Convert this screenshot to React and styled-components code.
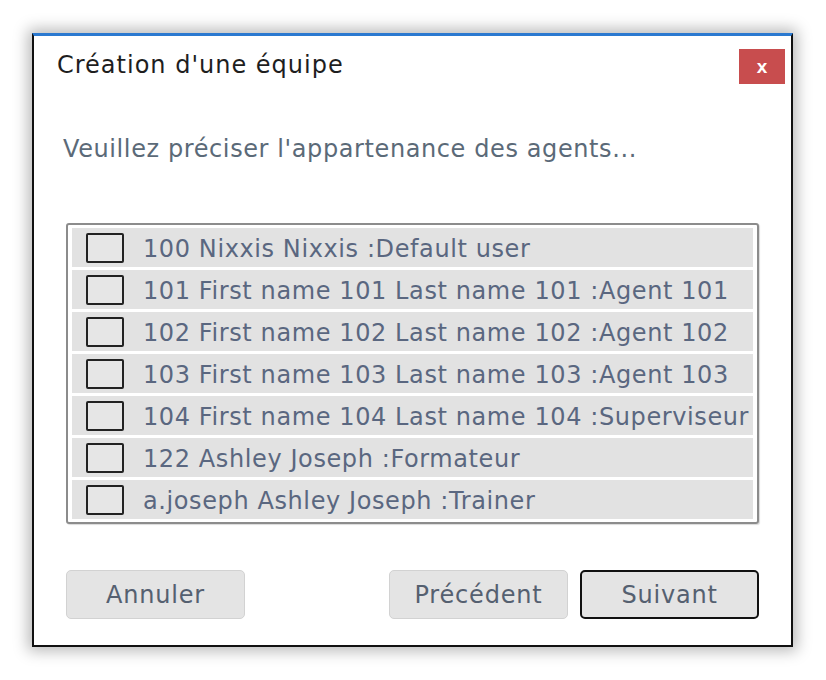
import React, {useState} from 'react'
import styled, {createGlobalStyle} from 'styled-components'

const GlobalStyle = createGlobalStyle`
  html, body {
    margin: 0;
    padding: 0;
    background: #ffffff;
  }
  body {
    font-family: "DejaVu Sans", "Open Sans", sans-serif;
  }
`

const agents = [
    "100 Nixxis Nixxis :Default user",
    "101 First name 101 Last name 101 :Agent 101",
    "102 First name 102 Last name 102 :Agent 102",
    "103 First name 103 Last name 103 :Agent 103",
    "104 First name 104 Last name 104 :Superviseur",
    "122 Ashley Joseph :Formateur",
    "a.joseph Ashley Joseph :Trainer",
]

const App = () => {
    const [checked, setChecked] = useState({})

    const toggle = (i) => {
        setChecked({...checked, [i]: !checked[i]})
    }

  return (
      <Page>
          <GlobalStyle />
          <Dialog>
              <Header>
                  <Title>Création d'une équipe</Title>
                  <CloseButton>x</CloseButton>
              </Header>
              <Intro>Veuillez préciser l'appartenance des agents...</Intro>
              <ListBox>
                  {agents.map((a, i) => (
                      <Row key={a} onClick={() => toggle(i)}>
                          <Check $on={checked[i]} />
                          <Label>{a}</Label>
                      </Row>
                  ))}
              </ListBox>
              <Footer>
                  <Button>Annuler</Button>
                  <Spacer />
                  <Button>Précédent</Button>
                  <Button $primary>Suivant</Button>
              </Footer>
          </Dialog>
      </Page>
  )
}

const Page = styled.div`
    padding: 33px 0 0 32px;
    height: 680px;
    box-sizing: border-box;
`

const Dialog = styled.div`
    width: 761px;
    height: 614px;
    box-sizing: border-box;
    border: 2px solid #111;
    border-top: 3px solid #2b79d0;
    background: #fff;
    box-shadow: 0 0 14px 4px rgba(0,0,0,0.28);
    display: flex;
    flex-direction: column;
    padding: 0 32px 0 32px;
`

const Header = styled.div`
    display: flex;
    justify-content: space-between;
    align-items: flex-start;
    margin: 0 -26px 0 -9px;
    padding-top: 13px;
    height: 60px;
`

const Title = styled.div`
    font-size: 24px;
    letter-spacing: 1px;
    color: #1e1e1e;
    padding-top: 2px;
`

const CloseButton = styled.div`
    width: 46px;
    height: 35px;
    background: #c84d4e;
    color: #fff;
    font-weight: 700;
    font-size: 19px;
    font-family: "Liberation Sans", sans-serif;
    display: flex;
    align-items: center;
    justify-content: center;
`

const Intro = styled.div`
    font-size: 24px;
    letter-spacing: 0.6px;
    color: #5b6a78;
    margin: 26px 0 0 -3px;
`

const ListBox = styled.div`
    margin-top: 60px;
    border: 2px solid #8c8c8c;
    border-radius: 3px;
    padding: 3px 4px 3px 4px;
    display: flex;
    flex-direction: column;
    gap: 3px;
    box-shadow: 1px 1px 1px rgba(0,0,0,0.15);
`

const Row = styled.div`
    height: 39px;
    background: #e2e2e2;
    display: flex;
    align-items: center;
    padding-left: 14px;
    overflow: hidden;
    cursor: pointer;
`

const Check = styled.div`
    flex: none;
    width: 34px;
    height: 26px;
    border: 2px solid #222;
    border-radius: 2px;
    background: ${p => p.$on ? '#9ab' : '#e6e6e6'};
`

const Label = styled.span`
    margin-left: 19px;
    padding-top: 3px;
    font-size: 24px;
    letter-spacing: 0.6px;
    color: #5a6780;
    white-space: nowrap;
`

const Footer = styled.div`
    margin-top: auto;
    margin-bottom: 26px;
    display: flex;
    gap: 12px;
`

const Spacer = styled.div`
    flex: 1;
`

const Button = styled.button`
    width: 179px;
    height: 49px;
    box-sizing: border-box;
    border-radius: 5px;
    background: #e4e4e4;
    border: ${p => p.$primary ? '2px solid #111' : '1px solid #d2d2d2'};
    font-family: "DejaVu Sans", "Open Sans", sans-serif;
    font-size: 24px;
    letter-spacing: 0.8px;
    color: #556070;
    padding-top: 2px;
    cursor: pointer;
`

export default App
